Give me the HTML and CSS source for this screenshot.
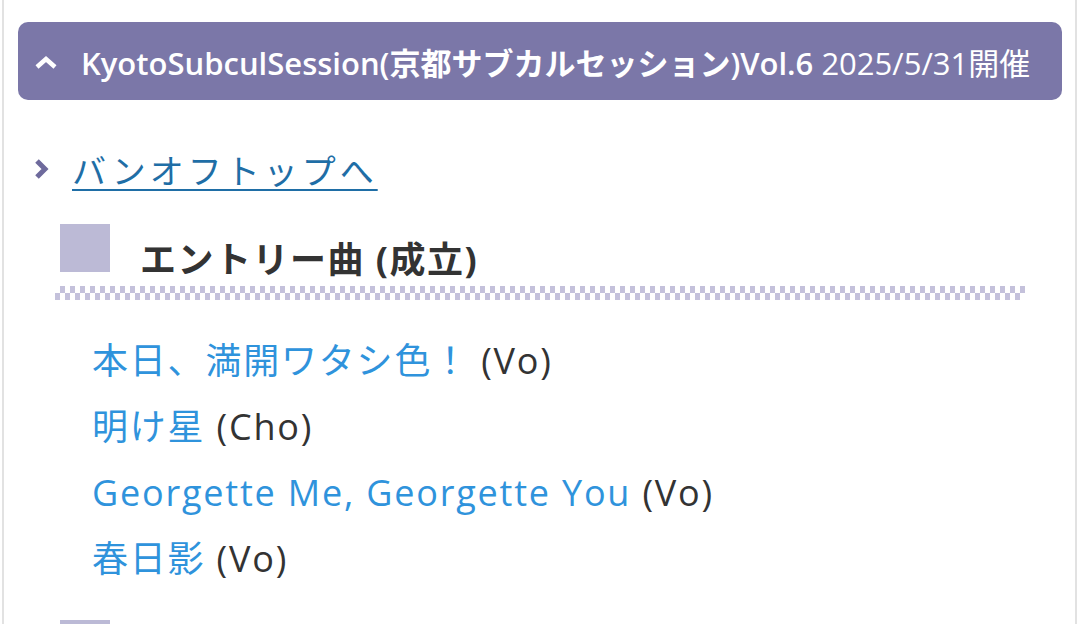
FILE: index.html
```html
<!DOCTYPE html>
<html lang="ja">
<head>
<meta charset="utf-8">
<link rel="stylesheet" href="styles.css">
</head>
<body>
<div class="page">
  <div class="header">
    <svg class="chev-up" width="24" height="14" viewBox="0 0 24 14"><path d="M3 12 L12 4 L21 12" fill="none" stroke="#fff" stroke-width="4.5" stroke-linecap="butt" stroke-linejoin="miter"/></svg>
    <span class="title"><b>KyotoSubculSession(京都サブカルセッション)Vol.6</b> 2025/5/31開催</span>
  </div>
  <div class="content">
    <div class="backlink">
      <svg class="chev-right" width="16" height="24" viewBox="0 0 16 24"><path d="M3 4 L11 12 L3 20" fill="none" stroke="#6e6a9c" stroke-width="5"/></svg>
      <a href="#" class="link">バンオフトップへ</a>
    </div>
    <div class="section">
      <h2 class="heading"><span class="square"></span><span class="heading-text">エントリー曲 (成立)</span></h2>
      <div class="dots"></div>
      <ul class="songs">
        <li><a href="#">本日、満開ワタシ色！</a> (Vo)</li>
        <li><a href="#">明け星</a> (Cho)</li>
        <li><a href="#">Georgette Me, Georgette You</a> (Vo)</li>
        <li><a href="#">春日影</a> (Vo)</li>
      </ul>
      <div class="next-square"></div>
    </div>
  </div>
</div>
</body>
</html>
```

FILE: styles.css
```css
html, body {
  margin: 0;
  padding: 0;
  background: #fff;
  overflow: hidden;
}
body {
  font-family: "Open Sans", "Noto Sans CJK JP", sans-serif;
  color: #333;
}
.page {
  margin-left: 2px;
  width: 1075px;
  height: 624px;
  border-left: 2px solid #e2e2e2;
  border-right: 2px solid #e2e2e2;
  box-sizing: border-box;
  padding: 22px 13px 0 14px;
}
.header {
  height: 78px;
  border-radius: 10px;
  background: #7b77a8;
  display: flex;
  align-items: center;
  padding-left: 16px;
  color: #fff;
}
.chev-up {
  display: block;
  margin-right: 23px;
  margin-top: 2px;
}
.title {
  font-size: 31px;
  white-space: nowrap;
  letter-spacing: 0;
}
.title b {
  font-weight: 600;
}
.content {
  padding-left: 16px;
}
.backlink {
  display: flex;
  align-items: center;
  margin-top: 47px;
  height: 44px;
}
.chev-right {
  display: block;
  margin-right: 22px;
}
.link {
  color: #1f6ea6;
  font-size: 34px;
  text-decoration: underline;
  text-underline-offset: 5px;
  text-decoration-thickness: 2px;
  letter-spacing: 4px;
}
.section {
  padding-left: 21px;
}
.heading {
  margin: 33px 0 0 0;
  display: flex;
  align-items: flex-start;
  font-size: 36px;
  font-weight: 700;
  color: #333;
  height: 56px;
}
.square {
  display: block;
  width: 50px;
  height: 48px;
  background: #bcbad6;
  margin-left: 5px;
  margin-right: 30px;
}
.heading-text {
  margin-top: 16px;
  line-height: 40px;
  letter-spacing: 1.5px;
}
.dots {
  margin-top: 6px;
  width: 970px;
  height: 14px;
  background-image:
    conic-gradient(#c4c1db 25%, #fff 0 50%, #c4c1db 0 75%, #fff 0);
  background-size: 10px 14px;
}
.songs {
  list-style: none;
  margin: 28px 0 0 0;
  padding: 0 0 0 37px;
  font-size: 36px;
  line-height: 66px;
  letter-spacing: 1.8px;
}
.songs a {
  color: #2f93dc;
  text-decoration: none;
}
.next-square {
  margin-top: 28px;
  margin-left: 5px;
  width: 50px;
  height: 48px;
  background: #bcbad6;
}
```
